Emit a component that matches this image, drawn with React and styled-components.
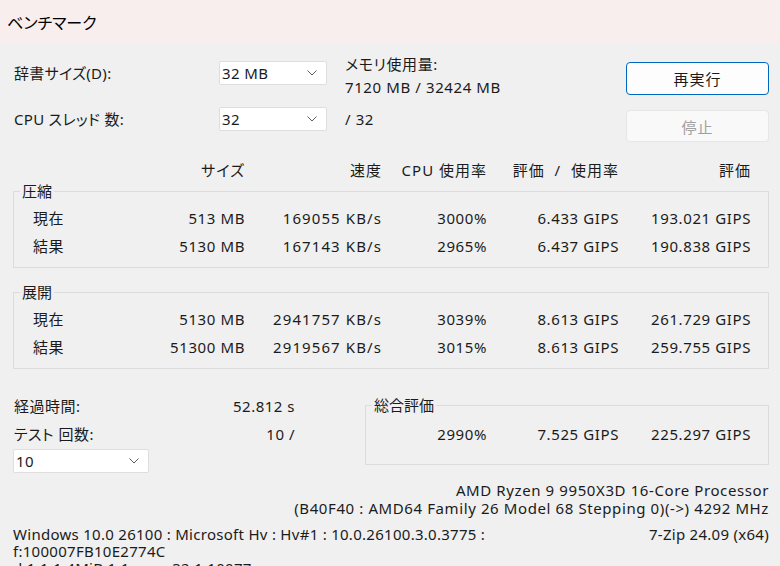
import styled, { createGlobalStyle } from "styled-components";

const GlobalStyle = createGlobalStyle`
  html, body {
    margin: 0;
    padding: 0;
    background: #f0f0f0;
  }
  body {
    font-family: "Noto Sans", "Noto Sans CJK JP", sans-serif;
    font-size: 15px;
    color: #1b1b1b;
    font-feature-settings: "palt";
  }
`;

const Window = styled.div`
  width: 780px;
  height: 566px;
  overflow: hidden;
  background: #f0f0f0;
`;

const TitleBar = styled.div`
  height: 43px;
  background: #f9eeee;
  display: flex;
  align-items: center;
  padding-left: 7px;
  font-size: 16px;
  color: #000;
`;

const Body = styled.div`
  padding: 0 11px 0 13px;
`;

const TopGrid = styled.div`
  display: grid;
  grid-template-columns: 206px 108px 1fr 143px;
  grid-template-rows: 46px auto;
  align-items: start;
  margin-top: 18px;
`;

const FieldLabel = styled.div`
  line-height: 24px;
  padding-left: 1px;
  letter-spacing: 0.3px;
`;

const ComboBox = styled.div`
  box-sizing: border-box;
  width: ${({ $width }) => $width || "108px"};
  height: 24px;
  margin-top: ${({ $top }) => $top || 0}px;
  background: #fff;
  border: 1px solid #dedede;
  border-radius: 2px;
  display: flex;
  align-items: center;
  justify-content: space-between;
  padding: 0 9px 0 2px;
  letter-spacing: 0.4px;
`;

const Chevron = () => (
  <svg width="10" height="6" viewBox="0 0 10 6">
    <path d="M0.5 0.5 L5 5 L9.5 0.5" fill="none" stroke="#5f5f5f" strokeWidth="1" />
  </svg>
);

const InfoBlock = styled.div`
  padding-left: 18px;
  line-height: ${({ $lh }) => $lh || 23}px;
  margin-top: ${({ $offset }) => $offset || 0}px;
  letter-spacing: 0.6px;
`;

const Button = styled.div`
  box-sizing: border-box;
  height: ${({ $h }) => $h}px;
  margin-top: ${({ $top }) => $top}px;
  display: flex;
  align-items: center;
  justify-content: center;
  border-radius: 4px;
  font-size: 15px;
  letter-spacing: 1px;
  background: ${({ $disabled }) => ($disabled ? "#f9f9f9" : "#fdfdfd")};
  border: 1px solid ${({ $disabled }) => ($disabled ? "#e6e6e6" : "#0067c0")};
  color: ${({ $disabled }) => ($disabled ? "#a0a0a0" : "#1b1b1b")};
`;

const COLS = "99px 132px 137px 105px 132px 132px";

const HeaderRow = styled.div`
  display: grid;
  grid-template-columns: ${COLS};
  padding: 0 18px 0 1px;
  margin-top: 16px;
  line-height: 24px;
  letter-spacing: 1px;
`;

const Cell = styled.div`
  text-align: ${({ $left }) => ($left ? "left" : "right")};
  padding-left: ${({ $indent }) => $indent || 0}px;
  white-space: pre;
`;

const Group = styled.fieldset`
  margin: ${({ $top }) => $top || 0}px 0 0 0;
  padding: ${({ $pt }) => $pt}px 17px ${({ $pb }) => $pb}px 0;
  border: 1px solid #dcdcdc;
  border-radius: 0;
  min-width: 0;
`;

const Legend = styled.legend`
  margin-left: 6px;
  padding: 0 2px;
  line-height: 20px;
  font-size: 15px;
`;

const DataRow = styled.div`
  display: grid;
  grid-template-columns: ${({ $cols }) => $cols};
  line-height: 28px;
  letter-spacing: 0.6px;
`;

const Speed = styled.span`
  letter-spacing: 1.1px;
`;

const BottomGrid = styled.div`
  display: grid;
  grid-template-columns: 352px 1fr;
  margin-top: 23px;
  align-items: start;
`;

const StatRow = styled.div`
  width: 282px;
  display: flex;
  justify-content: space-between;
  line-height: 28px;
  padding-left: 1px;
  box-sizing: border-box;
  letter-spacing: 0.5px;
`;

const SummaryWrap = styled.div`
  margin-top: 3px;
`;

const CpuInfo = styled.div`
  margin-top: 8px;
  text-align: right;
  line-height: 18px;
  letter-spacing: 0.6px;
  white-space: nowrap;
`;

const SysInfo = styled.div`
  margin-top: 9px;
  display: flex;
  justify-content: space-between;
  line-height: 17px;
  letter-spacing: 0.28px;
  white-space: nowrap;
`;

const Line = styled.div``;

const compress = [
  { label: "現在", size: "513 MB", speed: "169055 KB/s", cpu: "3000%", per: "6.433 GIPS", rating: "193.021 GIPS" },
  { label: "結果", size: "5130 MB", speed: "167143 KB/s", cpu: "2965%", per: "6.437 GIPS", rating: "190.838 GIPS" },
];

const decompress = [
  { label: "現在", size: "5130 MB", speed: "2941757 KB/s", cpu: "3039%", per: "8.613 GIPS", rating: "261.729 GIPS" },
  { label: "結果", size: "51300 MB", speed: "2919567 KB/s", cpu: "3015%", per: "8.613 GIPS", rating: "259.755 GIPS" },
];

const ResultGroup = ({ title, rows, top }) => (
  <Group $top={top} $pt={3} $pb={7}>
    <Legend>{title}</Legend>
    {rows.map((r) => (
      <DataRow key={r.label} $cols={COLS}>
        <Cell $left $indent={19}>{r.label}</Cell>
        <Cell>{r.size}</Cell>
        <Cell><Speed>{r.speed}</Speed></Cell>
        <Cell>{r.cpu}</Cell>
        <Cell>{r.per}</Cell>
        <Cell>{r.rating}</Cell>
      </DataRow>
    ))}
  </Group>
);

export default function App() {
  return (
    <Window>
      <GlobalStyle />
      <TitleBar>ベンチマーク</TitleBar>
      <Body>
        <TopGrid>
          <FieldLabel>辞書サイズ(D):</FieldLabel>
          <ComboBox>
            <span>32 MB</span>
            <Chevron />
          </ComboBox>
          <InfoBlock $offset={-8}>
            <Line>メモリ使用量:</Line>
            <Line>7120 MB / 32424 MB</Line>
          </InfoBlock>
          <Button $h={33} $top={1}>再実行</Button>

          <FieldLabel>CPU スレッド 数:</FieldLabel>
          <ComboBox>
            <span>32</span>
            <Chevron />
          </ComboBox>
          <InfoBlock $lh={24}>
            <Line>/ 32</Line>
          </InfoBlock>
          <Button $h={32} $top={3} $disabled>停止</Button>
        </TopGrid>

        <HeaderRow>
          <Cell />
          <Cell>サイズ</Cell>
          <Cell>速度</Cell>
          <Cell>CPU 使用率</Cell>
          <Cell>評価  /  使用率</Cell>
          <Cell>評価</Cell>
        </HeaderRow>

        <ResultGroup title="圧縮" rows={compress} top={-1} />
        <ResultGroup title="展開" rows={decompress} top={14} />

        <BottomGrid>
          <div>
            <StatRow>
              <span>経過時間:</span>
              <span>52.812 s</span>
            </StatRow>
            <StatRow>
              <span>テスト 回数:</span>
              <span>10 /</span>
            </StatRow>
            <ComboBox $width="136px" $top={1}>
              <span>10</span>
              <Chevron />
            </ComboBox>
          </div>
          <SummaryWrap>
            <Group $pt={5} $pb={16}>
              <Legend>総合評価</Legend>
              <DataRow $cols="121px 132px 132px">
                <Cell>2990%</Cell>
                <Cell>7.525 GIPS</Cell>
                <Cell>225.297 GIPS</Cell>
              </DataRow>
            </Group>
          </SummaryWrap>
        </BottomGrid>

        <CpuInfo>
          <Line>AMD Ryzen 9 9950X3D 16-Core Processor</Line>
          <Line>(B40F40 : AMD64 Family 26 Model 68 Stepping 0)(-&gt;) 4292 MHz</Line>
        </CpuInfo>

        <SysInfo>
          <div>
            <Line>Windows 10.0 26100 : Microsoft Hv : Hv#1 : 10.0.26100.3.0.3775 :</Line>
            <Line>f:100007FB10E2774C</Line>
            <Line>d:1:1:1:4MiB:1:1:cpus:32:1:10077</Line>
          </div>
          <Line>7-Zip 24.09 (x64)</Line>
        </SysInfo>
      </Body>
    </Window>
  );
}
